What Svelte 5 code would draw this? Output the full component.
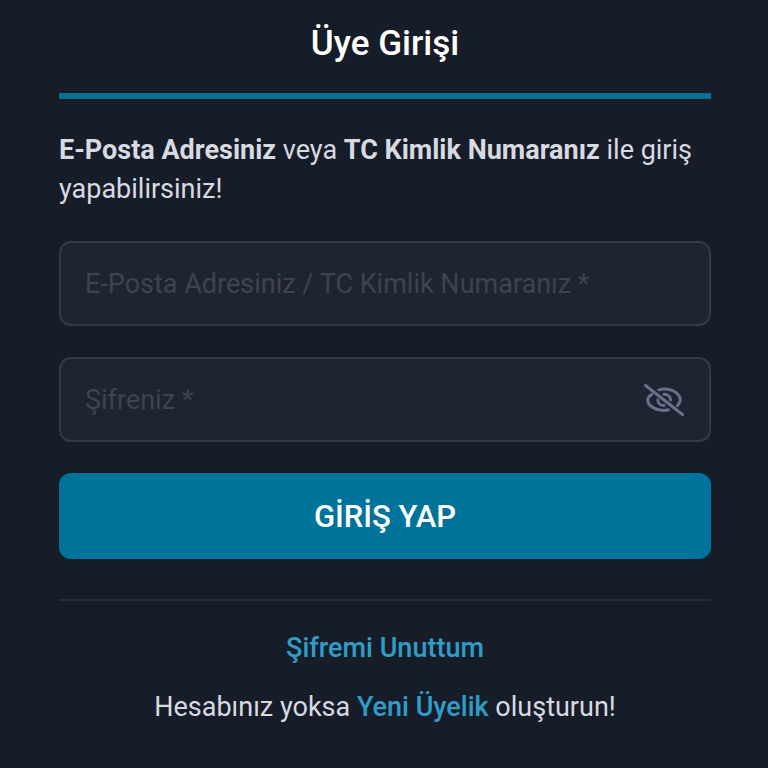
<script lang="ts">
  let identity = $state("");
  let password = $state("");
  let visible = $state(false);
</script>

<main>
  <h1>Üye Girişi</h1>
  <p class="intro">
    <strong>E-Posta Adresiniz</strong> veya <strong>TC Kimlik Numaranız</strong> ile giriş yapabilirsiniz!
  </p>

  <form onsubmit={(e) => e.preventDefault()}>
    <label class="field">
      <input
        type="text"
        autocomplete="username"
        aria-label="E-Posta Adresiniz / TC Kimlik Numaranız"
        placeholder="E-Posta Adresiniz / TC Kimlik Numaranız *"
        bind:value={identity}
      />
    </label>
    <div class="field">
      <input
        type={visible ? "text" : "password"}
        autocomplete="current-password"
        aria-label="Şifreniz"
        placeholder="Şifreniz *"
        bind:value={password}
      />
      <button class="toggle" type="button" aria-label="Şifreyi göster" onclick={() => (visible = !visible)}>
        <svg width="42" height="34" viewBox="0 0 42 34" aria-hidden="true">
          <path d="M15.7 6.8C18 6 20 6 21.5 6C31 6 37.3 12 37.3 17C37.3 19 36.2 20.8 34.4 22.6" />
          <path d="M8.6 11.6C6 13.3 4.7 15.2 4.7 17.2C4.7 22 11.5 27.4 20.5 27.4C22.3 27.4 23.8 27.2 25.4 26.8" />
          <path d="M21 11.2C24.6 11.2 27.4 13.6 27.6 16.8" />
          <path d="M14.8 17C15 20.2 17.6 22.6 21 22.6" />
          <path d="M2.5 2.5L39.5 31.5" />
        </svg>
      </button>
    </div>
    <button class="submit" type="submit">GİRİŞ YAP</button>
  </form>

  <footer>
    <a href="#forgot">Şifremi Unuttum</a>
    <p>Hesabınız yoksa <a href="#register">Yeni Üyelik</a> oluşturun!</p>
  </footer>
</main>

<style>
  :global(body) {
    margin: 0;
    background: #171d28;
  }
  main {
    padding: 20px 57px 24px 59px;
    font-family: Roboto, sans-serif;
    font-size: 27px;
    line-height: 39px;
    color: #d8dae2;
  }
  h1 {
    margin: 0 0 32px;
    padding-bottom: 25px;
    border-bottom: 6px solid #05708f;
    font-size: 35px;
    font-weight: 500;
    line-height: 48px;
    text-align: center;
    color: #fff;
  }
  p {
    margin: 0;
  }
  .intro {
    margin-bottom: 32px;
  }
  strong {
    font-weight: 700;
  }
  form {
    display: flex;
    flex-direction: column;
    gap: 31px;
    padding-bottom: 40px;
    border-bottom: 2px solid #272d38;
  }
  .field {
    display: flex;
    align-items: center;
    box-sizing: border-box;
    height: 85px;
    padding: 0 24px;
    border: 2px solid #343945;
    border-radius: 12px;
    background: #1f2530;
  }
  .field:focus-within {
    border-color: #00739a;
  }
  input {
    flex: 1;
    min-width: 0;
    height: 100%;
    padding: 0;
    border: 0;
    outline: 0;
    background: none;
    font: inherit;
    color: inherit;
  }
  input::placeholder {
    color: #3e4350;
    opacity: 1;
  }
  button {
    padding: 0;
    border: 0;
    cursor: pointer;
  }
  .toggle {
    display: flex;
    background: none;
  }
  svg {
    fill: none;
    stroke: #69718c;
    stroke-width: 3;
    stroke-linecap: round;
  }
  .submit {
    height: 86px;
    border-radius: 12px;
    background: #00739a;
    font-family: inherit;
    font-size: 31px;
    font-weight: 500;
    color: #fff;
  }
  footer {
    display: flex;
    flex-direction: column;
    align-items: center;
    gap: 20px;
    padding-top: 28px;
  }
  a {
    font-weight: 500;
    color: #2f9dc8;
    text-decoration: none;
  }
</style>
